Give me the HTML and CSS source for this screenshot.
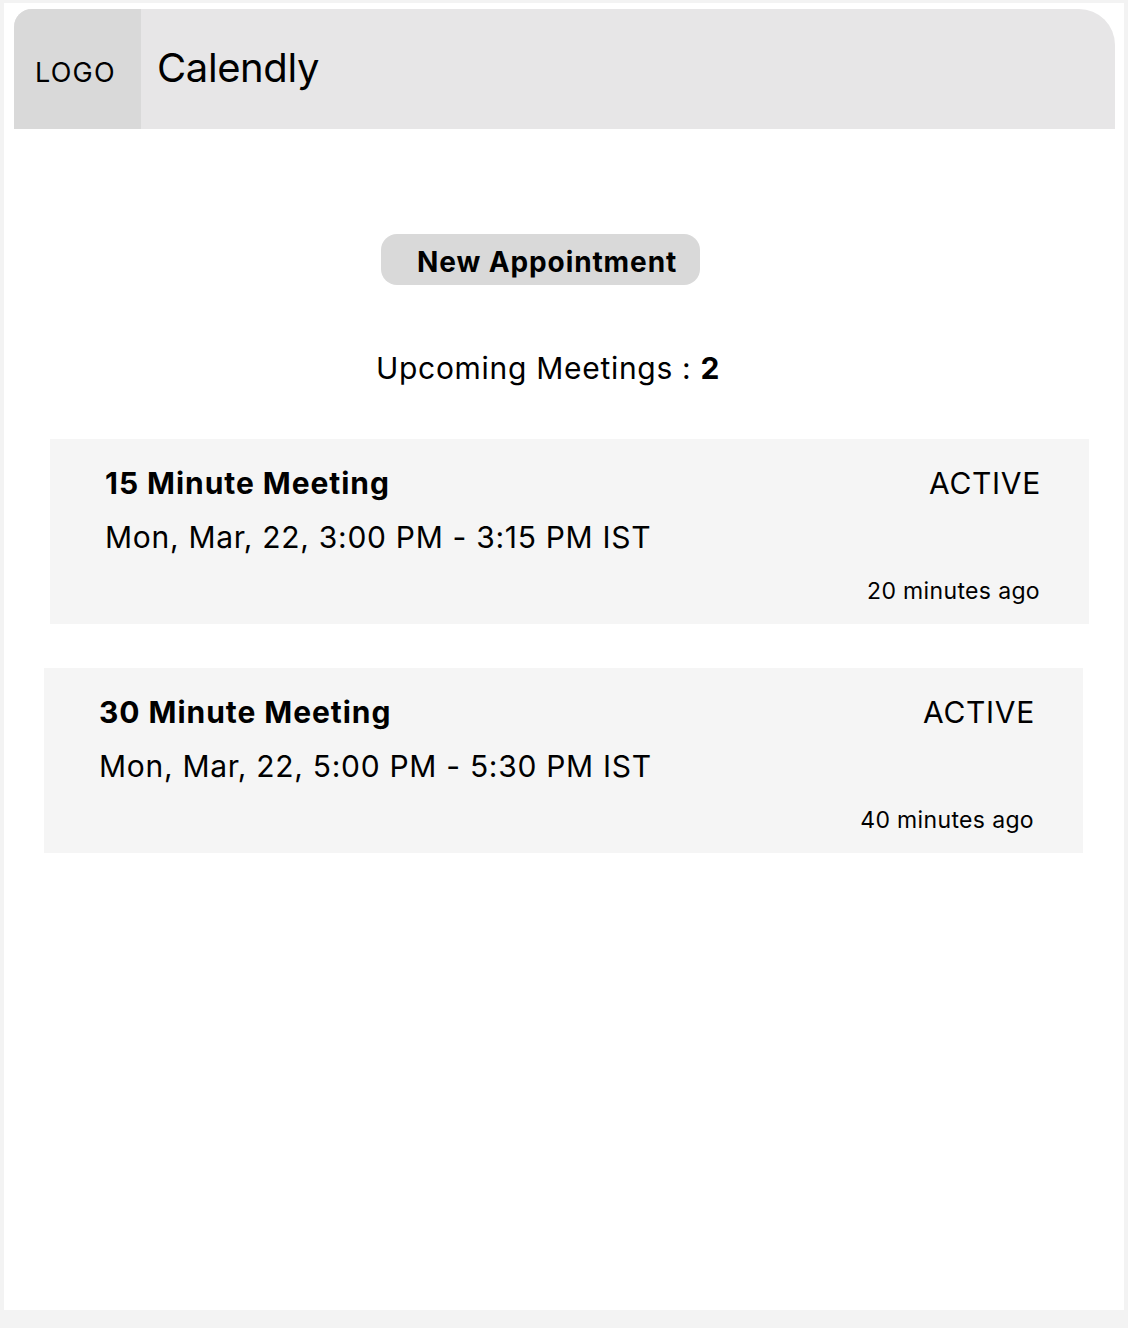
FILE: index.html
```html
<!DOCTYPE html>
<html lang="en">
<head>
<meta charset="utf-8">
<title>Calendly</title>
<link rel="stylesheet" href="styles.css">
</head>
<body>
<div class="frame">
  <header class="header">
    <div class="logo">LOGO</div>
    <div class="brand">Calendly</div>
  </header>
  <main class="content">
    <button class="new-btn">New Appointment</button>
    <h2 class="upcoming">Upcoming Meetings : <b>2</b></h2>
    <section class="card card-one">
      <div class="card-row">
        <div class="card-title">15 Minute Meeting</div>
        <div class="card-status">ACTIVE</div>
      </div>
      <div class="card-time">Mon, Mar, 22, 3:00 PM - 3:15 PM IST</div>
      <div class="card-ago">20 minutes ago</div>
    </section>
    <section class="card card-two">
      <div class="card-row">
        <div class="card-title">30 Minute Meeting</div>
        <div class="card-status">ACTIVE</div>
      </div>
      <div class="card-time">Mon, Mar, 22, 5:00 PM - 5:30 PM IST</div>
      <div class="card-ago">40 minutes ago</div>
    </section>
  </main>
</div>
</body>
</html>
```

FILE: styles.css
```css
* { box-sizing: border-box; }

html, body {
  margin: 0;
  background: #f3f3f3;
}

body {
  padding: 3px 4px 18px 4px;
  font-family: Inter, "Noto Sans", "Liberation Sans", sans-serif;
  color: #000;
}

.frame {
  background: #ffffff;
  width: 1120px;
  height: 1307px;
  padding: 6px 9px 0 10px;
}

.header {
  display: flex;
  height: 120px;
  background: #e7e6e7;
  border-radius: 18px 36px 0 0;
  overflow: hidden;
}

.logo {
  width: 127px;
  height: 100%;
  background: #d9d9d9;
  font-size: 27px;
  line-height: 32px;
  letter-spacing: 1.2px;
  padding: 48px 0 0 21px;
}

.brand {
  margin-left: 16px;
  font-size: 40px;
  line-height: 48px;
  letter-spacing: -0.4px;
  padding-top: 35px;
}

.content {
  display: flex;
  flex-direction: column;
  align-items: flex-start;
}

.new-btn {
  margin: 105px 0 0 367px;
  height: 51px;
  border: none;
  border-radius: 16px;
  background: #d9d9d9;
  font-family: inherit;
  font-size: 28px;
  font-weight: 700;
  letter-spacing: 0.9px;
  line-height: 46px;
  padding: 5px 23px 0 36px;
  color: #000;
}

.upcoming {
  margin: 65px 0 0 362px;
  font-size: 30px;
  line-height: 36px;
  font-weight: 400;
  letter-spacing: 0.7px;
}

.upcoming b { font-weight: 700; }

.card {
  width: 1039px;
  height: 185px;
  background: #f5f5f5;
  padding: 26px 48px 0 55px;
  display: flex;
  flex-direction: column;
}

.card-one { margin: 53px 0 0 36px; }
.card-two { margin: 44px 0 0 30px; }

.card-row {
  display: flex;
  justify-content: space-between;
}

.card-title {
  font-size: 30px;
  line-height: 36px;
  font-weight: 700;
  letter-spacing: 0.95px;
}

.card-status {
  font-size: 30px;
  line-height: 36px;
  letter-spacing: 0.7px;
}

.card-time {
  margin-top: 18px;
  font-size: 30px;
  line-height: 36px;
  letter-spacing: 0.7px;
}

.card-ago {
  margin-top: 22px;
  align-self: flex-end;
  margin-right: 1px;
  font-size: 23px;
  line-height: 28px;
  letter-spacing: 0.35px;
}
```
